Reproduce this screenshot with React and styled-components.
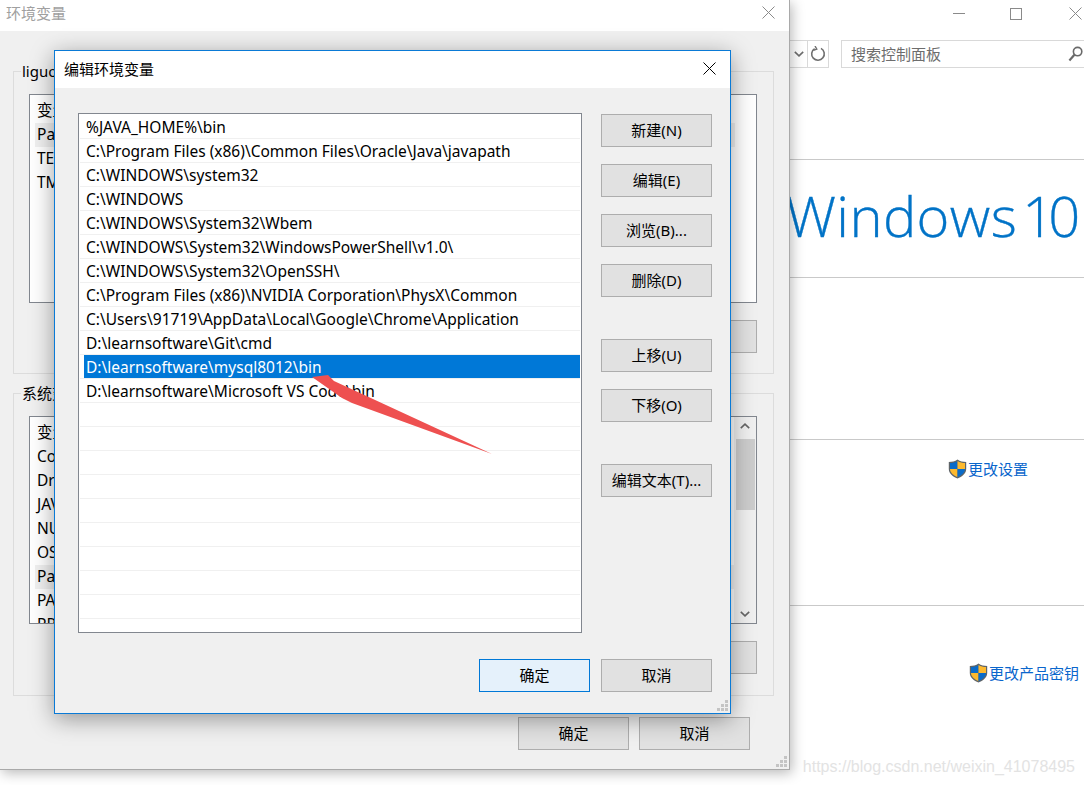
import React from "react";
import styled, { createGlobalStyle } from "styled-components";

const GlobalStyle = createGlobalStyle`
  html, body {
    margin: 0;
    padding: 0;
    background: #fff;
    overflow: hidden;
  }
  * { box-sizing: border-box; }
`;

const uiFont = `"Noto Sans", "Noto Sans CJK SC", sans-serif`;

const Desktop = styled.div`
  position: relative;
  width: 1084px;
  height: 785px;
  overflow: hidden;
  background: #fff;
  font-family: ${uiFont};
  font-size: 15px;
  color: #000;
`;

/* control panel behind the two dialogs */
const ControlPanel = styled.div`
  width: 1110px;
  height: 785px;
  padding-left: 789px;
  display: flex;
  flex-direction: column;
`;

const Section = styled.div`
  height: ${(p) => p.h}px;
  flex: none;
  border-bottom: ${(p) => (p.last ? "none" : "1px solid #c9c9c9")};
  padding-top: ${(p) => p.top || 0}px;
  width: 295px;
`;

const WinControls = styled.div`
  display: flex;
  align-items: center;
  height: 40px;
  padding: 0 0 13px 164px;
  gap: 41px;
`;

const WinButton = styled.svg`
  display: block;
  flex: none;
  margin-left: ${(p) => p.$ml || 0}px;
`;

const NavBar = styled.div`
  display: flex;
  height: 28px;
`;

const NavDrop = styled.div`
  width: 18px;
  flex: none;
  border: 1px solid #d9d9d9;
  border-left: none;
  border-right: none;
  display: flex;
  align-items: center;
  justify-content: center;
  padding-left: 2px;
`;

const NavRefresh = styled.div`
  width: 22px;
  flex: none;
  border: 1px solid #d9d9d9;
  display: flex;
  align-items: center;
  justify-content: center;
`;

const SearchBox = styled.div`
  margin-left: 12px;
  width: 260px;
  flex: none;
  border: 1px solid #d9d9d9;
  display: flex;
  align-items: center;
  justify-content: space-between;
  padding: 0 17px 0 9px;
  color: #6d6d6d;
  font-size: 15px;
  line-height: 26px;
`;

const WinLogo = styled.div`
  font-family: "Open Sans", sans-serif;
  font-weight: 300;
  font-size: 56px;
  line-height: 76px;
  letter-spacing: 0.4px;
  -webkit-text-stroke: 0.35px #0173c7;
  color: #0173c7;
  white-space: nowrap;
  margin-left: -3px;

  span {
    margin-left: 5px;
    letter-spacing: -6px;
  }
`;

const AdminLink = styled.div`
  display: flex;
  justify-content: flex-end;
  align-items: center;
  gap: 1px;
  padding-right: ${(p) => p.right}px;
  color: #0a66cc;
  font-size: 15px;
  line-height: 20px;
  white-space: nowrap;
`;

const Watermark = styled.div`
  position: absolute;
  right: 9px;
  top: 757px;
  font-family: "Liberation Sans", sans-serif;
  font-size: 16px;
  line-height: 20px;
  color: #e3e3e3;
  white-space: nowrap;
`;

/* windows */
const EnvWindow = styled.div`
  position: absolute;
  left: 0;
  top: 0;
  width: 790px;
  height: 770px;
  background: #f0f0f0;
  border-right: 1px solid #a9a9a9;
  border-bottom: 1px solid #a9a9a9;
  box-shadow: 2px 3px 12px rgba(0, 0, 0, 0.28);
`;

const EditDialog = styled.div`
  position: absolute;
  left: 54px;
  top: 50px;
  width: 677px;
  height: 664px;
  background: #f0f0f0;
  border: 1px solid #0a7ad6;
  box-shadow: 0 5px 22px rgba(0, 0, 0, 0.38);
`;

const TitleBar = styled.div`
  height: ${(p) => p.h}px;
  background: #fff;
  display: flex;
  align-items: center;
  justify-content: space-between;
  padding: 0 ${(p) => p.pr}px ${(p) => p.pb}px ${(p) => p.pl}px;
  color: ${(p) => (p.inactive ? "#a0a0a0" : "#000")};
  font-size: 15px;
`;

const GroupBox = styled.div`
  position: relative;
  margin: ${(p) => p.mt}px 15px 0 13px;
  height: ${(p) => p.h}px;
  border: 1px solid #dcdcdc;
  padding: 22px 16px 0 15px;
`;

const GroupLabel = styled.div`
  position: absolute;
  left: 7px;
  top: -11px;
  padding: 0 1px;
  background: #f0f0f0;
  line-height: 20px;
`;

const VarList = styled.div`
  position: relative;
  height: ${(p) => p.h}px;
  border: 1px solid #82878f;
  background: #fff;
  padding: 4px 0 0 5px;
  overflow: hidden;
`;

const VarRow = styled.div`
  height: 24px;
  line-height: 23px;
  padding-left: 2px;
  margin-right: ${(p) => (p.scroll ? "22px" : "21px")};
  background: ${(p) => (p.hover ? "#f0f0f0" : "transparent")};
  white-space: nowrap;
  font-size: 15.5px;
`;

const ScrollBar = styled.div`
  position: absolute;
  right: 0;
  top: 0;
  bottom: 0;
  width: 22px;
  background: #f0f0f0;
  display: flex;
  flex-direction: column;
  align-items: center;
  justify-content: space-between;
  padding: 6px 0;
`;

const ScrollThumb = styled.div`
  position: absolute;
  left: 2px;
  right: 1px;
  top: 22px;
  height: 71px;
  background: #cdcdcd;
`;

const GroupActions = styled.div`
  display: flex;
  justify-content: flex-end;
  gap: 11px;
  margin-top: 17px;
`;

const EnvFooter = styled.div`
  display: flex;
  justify-content: flex-end;
  gap: 10px;
  margin-top: 21px;
  padding-right: 39px;
`;

const Btn = styled.button`
  width: 111px;
  height: 33px;
  padding: 0;
  flex: none;
  background: ${(p) => (p.primary ? "#e5f1fb" : "#e1e1e1")};
  border: 1px solid ${(p) => (p.primary ? "#0078d7" : "#adadad")};
  font-family: ${uiFont};
  font-size: 15px;
  line-height: 31px;
  color: #000;
  white-space: nowrap;
`;

const DialogBody = styled.div`
  display: flex;
  gap: 19px;
  padding: 25px 0 0 23px;
`;

const PathList = styled.div`
  width: 504px;
  height: 520px;
  border: 1px solid #82878f;
  background: #fff;
  padding: 1px 1px 0 1px;
  overflow: hidden;
`;

const PathRow = styled.div`
  height: 24px;
  padding-left: 4px;
  border-bottom: 1px solid #f0f0f0;
`;

const PathLabel = styled.div`
  height: 23px;
  padding: 1px 0 0 2px;
  line-height: 23px;
  white-space: nowrap;
  font-size: 15.5px;
  background: ${(p) => (p.selected ? "#0078d7" : "transparent")};
  color: ${(p) => (p.selected ? "#fff" : "#000")};
`;

const SideButtons = styled.div`
  display: flex;
  flex-direction: column;
  padding-top: 1px;
`;

const SideBtn = styled(Btn)`
  margin-top: ${(p) => p.gap}px;
`;

const DialogFooter = styled.div`
  display: flex;
  justify-content: flex-end;
  gap: 11px;
  margin-top: 26px;
  padding-right: 18px;
`;

const Grip = styled.svg`
  position: absolute;
  right: 2px;
  bottom: 2px;
  display: block;
`;

const Arrow = styled.svg`
  position: absolute;
  left: 0;
  top: 0;
  pointer-events: none;
`;

const ResizeGrip = () => (
  <Grip width="11" height="11" viewBox="0 0 11 11" fill="#c4c4c4">
    <rect x="8" y="0" width="3" height="3" />
    <rect x="4" y="4" width="3" height="3" />
    <rect x="8" y="4" width="3" height="3" />
    <rect x="0" y="8" width="3" height="3" />
    <rect x="4" y="8" width="3" height="3" />
    <rect x="8" y="8" width="3" height="3" />
  </Grip>
);

const CloseIcon = ({ color = "#000", size = 13 }) => (
  <svg width={size} height={size} viewBox="0 0 13 13" style={{ display: "block" }}>
    <path d="M0.5 0.5 L12.5 12.5 M12.5 0.5 L0.5 12.5" stroke={color} strokeWidth="1" fill="none" />
  </svg>
);

const Chevron = ({ up, color = "#666", w = 10 }) => (
  <svg width={w} height="6" viewBox="0 0 10 6" style={{ display: "block" }}>
    <path d={up ? "M0.8 5.2 L5 1.2 L9.2 5.2" : "M0.8 0.8 L5 4.8 L9.2 0.8"} stroke={color} strokeWidth="1.6" fill="none" />
  </svg>
);

const Shield = () => (
  <svg width="19" height="20" viewBox="0 0 19 20" style={{ display: "block" }}>
    <path d="M9.5 0.6 C7 2.4 4 3 0.8 3 L0.8 10 C0.8 14.5 5 17.8 9.5 19.4 C14 17.8 18.2 14.5 18.2 10 L18.2 3 C15 3 12 2.4 9.5 0.6 Z" fill="#5f6468" />
    <path d="M9.5 2 C7.2 3.4 4.6 4 2 4.1 L2 10 L9.5 10 Z" fill="#0a6bc9" />
    <path d="M9.5 2 C11.8 3.4 14.4 4 17 4.1 L17 10 L9.5 10 Z" fill="#fdb92e" />
    <path d="M2 10 C2.2 13.8 5.6 16.6 9.5 18 L9.5 10 Z" fill="#fdb92e" />
    <path d="M17 10 C16.8 13.8 13.4 16.6 9.5 18 L9.5 10 Z" fill="#0a6bc9" />
  </svg>
);

const pathEntries = [
  "%JAVA_HOME%\\bin",
  "C:\\Program Files (x86)\\Common Files\\Oracle\\Java\\javapath",
  "C:\\WINDOWS\\system32",
  "C:\\WINDOWS",
  "C:\\WINDOWS\\System32\\Wbem",
  "C:\\WINDOWS\\System32\\WindowsPowerShell\\v1.0\\",
  "C:\\WINDOWS\\System32\\OpenSSH\\",
  "C:\\Program Files (x86)\\NVIDIA Corporation\\PhysX\\Common",
  "C:\\Users\\91719\\AppData\\Local\\Google\\Chrome\\Application",
  "D:\\learnsoftware\\Git\\cmd",
  "D:\\learnsoftware\\mysql8012\\bin",
  "D:\\learnsoftware\\Microsoft VS Code\\bin",
];
const emptyRows = Array.from({ length: 10 }, () => "");

const userVars = ["变量", "Path", "TEMP", "TMP"];
const systemVars = ["变量", "ComSpec", "DriverData", "JAVA_HOME", "NUMBER_OF_PROCESSORS", "OS", "Path", "PATHEXT", "PROCESSOR_ARCHITECTURE"];

export default function App() {
  return (
    <Desktop>
      <GlobalStyle />

      <ControlPanel>
        <Section h={160}>
          <WinControls>
            <WinButton width="12" height="2" viewBox="0 0 12 2">
              <rect width="12" height="1" fill="#8a8a8a" />
            </WinButton>
            <WinButton $ml={4} width="12" height="12" viewBox="0 0 12 12">
              <rect x="0.5" y="0.5" width="11" height="11" fill="none" stroke="#8a8a8a" />
            </WinButton>
            <WinButton $ml={6} width="13" height="13" viewBox="0 0 13 13">
              <path d="M0.5 0.5 L12.5 12.5 M12.5 0.5 L0.5 12.5" stroke="#8a8a8a" fill="none" />
            </WinButton>
          </WinControls>
          <NavBar>
            <NavDrop>
              <Chevron color="#6d6d6d" />
            </NavDrop>
            <NavRefresh>
              <svg width="16" height="16" viewBox="0 0 16 16" style={{ display: "block" }}>
                <path d="M4.6 2.6 A6.3 6.3 0 1 0 11 2.4" fill="none" stroke="#6f6f6f" strokeWidth="1.6" />
                <path d="M5 0 L6.8 3.2 L3.4 4.4" fill="none" stroke="#6f6f6f" strokeWidth="1.4" />
              </svg>
            </NavRefresh>
            <SearchBox>
              搜索控制面板
              <svg width="15" height="16" viewBox="0 0 15 16" style={{ display: "block" }}>
                <circle cx="9.6" cy="5.6" r="4.2" fill="none" stroke="#6a6a6a" strokeWidth="1.6" />
                <path d="M6.4 8.8 L1.4 14.4" stroke="#6a6a6a" strokeWidth="2.2" />
              </svg>
            </SearchBox>
          </NavBar>
        </Section>
        <Section h={118} top={17}>
          <WinLogo>
            Windows<span>10</span>
          </WinLogo>
        </Section>
        <Section h={162} />
        <Section h={166} top={19}>
          <AdminLink right={56}>
            <Shield />
            更改设置
          </AdminLink>
        </Section>
        <Section h={179} top={57} last>
          <AdminLink right={5}>
            <Shield />
            更改产品密钥
          </AdminLink>
        </Section>
      </ControlPanel>

      <Watermark>https://blog.csdn.net/weixin_41078495</Watermark>

      <EnvWindow>
        <TitleBar inactive h={31} pl={6} pr={14} pb={7}>
          环境变量
          <CloseIcon color="#8a8a8a" />
        </TitleBar>
        <GroupBox mt={40} h={303}>
          <GroupLabel>liguo 的用户变量</GroupLabel>
          <VarList h={209}>
            {userVars.map((name) => (
              <VarRow key={name} hover={name === "Path"}>
                {name}
              </VarRow>
            ))}
          </VarList>
          <GroupActions>
            <Btn>新建(N)...</Btn>
            <Btn>编辑(E)...</Btn>
            <Btn>删除(D)</Btn>
          </GroupActions>
        </GroupBox>
        <GroupBox mt={19} h={303}>
          <GroupLabel>系统变量(S)</GroupLabel>
          <VarList h={208}>
            {systemVars.map((name) => (
              <VarRow key={name} scroll hover={name === "Path"}>
                {name}
              </VarRow>
            ))}
            <ScrollBar>
              <Chevron up />
              <ScrollThumb />
              <Chevron />
            </ScrollBar>
          </VarList>
          <GroupActions>
            <Btn>新建(W)...</Btn>
            <Btn>编辑(I)...</Btn>
            <Btn>删除(L)</Btn>
          </GroupActions>
        </GroupBox>
        <EnvFooter>
          <Btn>确定</Btn>
          <Btn>取消</Btn>
        </EnvFooter>
        <ResizeGrip />
      </EnvWindow>

      <EditDialog>
        <TitleBar h={37} pl={9} pr={14} pb={2}>
          编辑环境变量
          <CloseIcon />
        </TitleBar>
        <DialogBody>
          <PathList>
            {pathEntries.concat(emptyRows).map((entry, i) => (
              <PathRow key={i}>
                <PathLabel selected={i === 10}>{entry}</PathLabel>
              </PathRow>
            ))}
          </PathList>
          <SideButtons>
            <SideBtn gap={0}>新建(N)</SideBtn>
            <SideBtn gap={17}>编辑(E)</SideBtn>
            <SideBtn gap={17}>浏览(B)...</SideBtn>
            <SideBtn gap={17}>删除(D)</SideBtn>
            <SideBtn gap={42}>上移(U)</SideBtn>
            <SideBtn gap={17}>下移(O)</SideBtn>
            <SideBtn gap={42}>编辑文本(T)...</SideBtn>
          </SideButtons>
        </DialogBody>
        <DialogFooter>
          <Btn primary>确定</Btn>
          <Btn>取消</Btn>
        </DialogFooter>
        <ResizeGrip />
      </EditDialog>

      <Arrow width="1084" height="785" viewBox="0 0 1084 785">
        <polygon points="312,377 328,375 334,381 492,454 352,403 342,398" fill="#ee5050" />
      </Arrow>
    </Desktop>
  );
}
